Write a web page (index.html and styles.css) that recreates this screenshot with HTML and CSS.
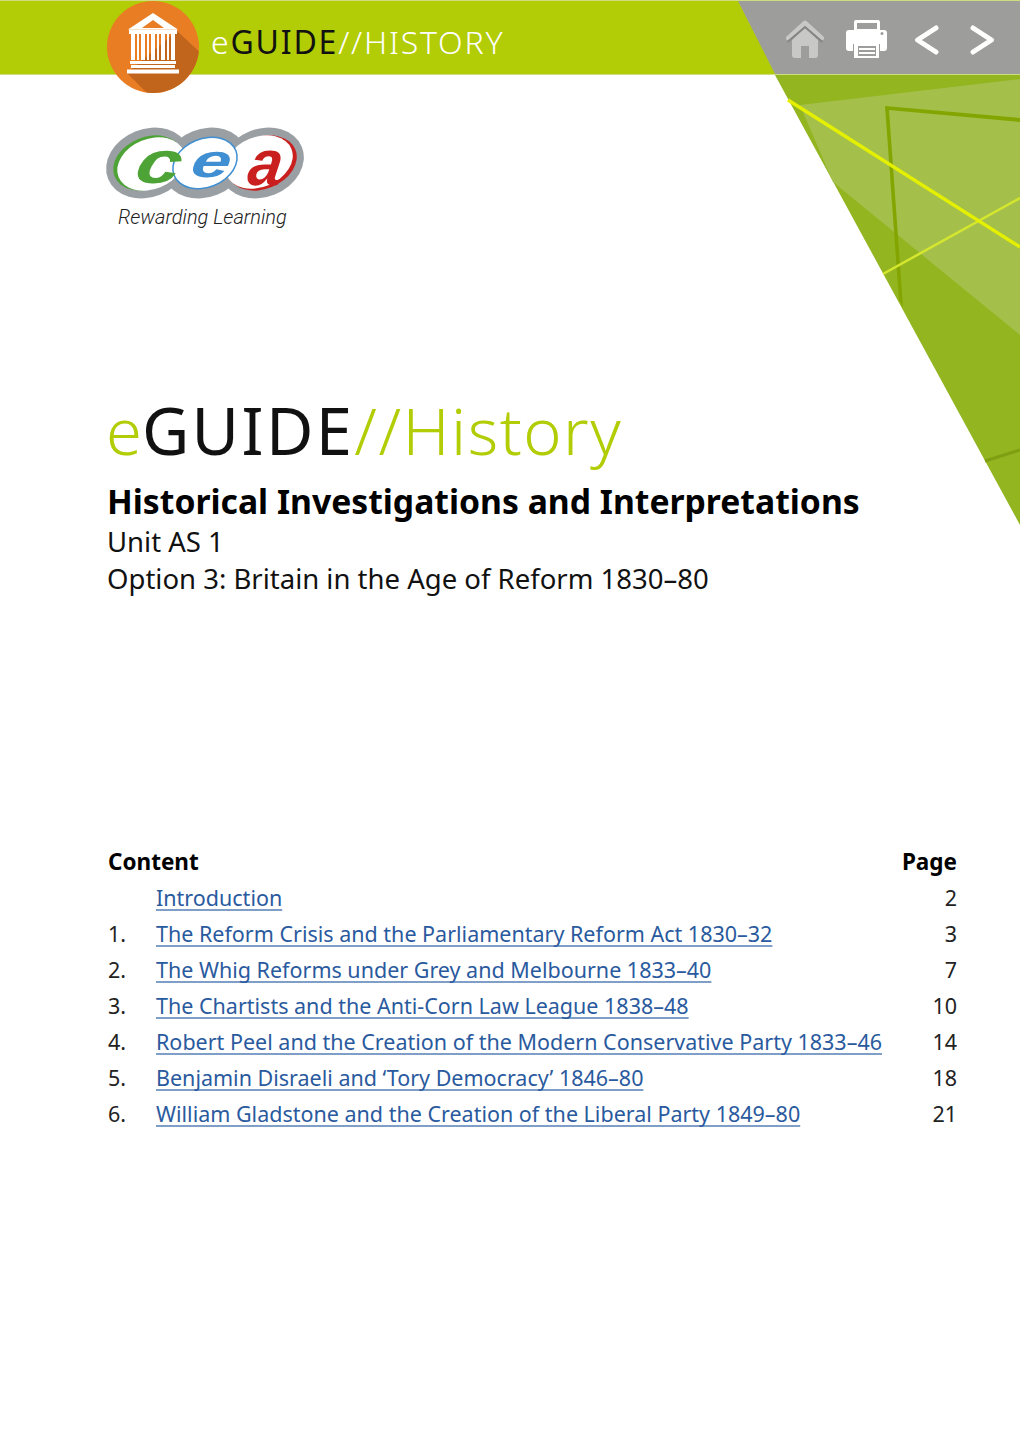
FILE: index.html
```html
<!DOCTYPE html>
<html lang="en">
<head>
<meta charset="utf-8">
<title>eGUIDE History</title>
<link rel="stylesheet" href="styles.css">
</head>
<body>
<div class="page">
  <svg class="corner" viewBox="0 0 245 450" aria-hidden="true">
    <g transform="translate(-775 -75)">
      <polygon points="775,75 1020,75 1020,525" fill="#92b520"/>
      <polygon points="800,105 1020,79 1020,335 833,182" fill="#a5c04a"/>
      <polygon points="885,106 1020,118 1020,122 889,110 903,307 899,300" fill="#84a500"/>
      <line x1="985" y1="461" x2="1020" y2="450" stroke="#7f9e12" stroke-width="3"/>
      <line x1="883" y1="274" x2="1020" y2="198" stroke="#d5e62f" stroke-width="2.500"/>
      <line x1="788" y1="100" x2="1020" y2="247" stroke="#e4f000" stroke-width="3.500"/>
    </g>
  </svg>

  <header class="topbar">
    <svg class="badge" viewBox="0 0 92 92" aria-hidden="true">
      <defs><clipPath id="disc"><circle cx="46" cy="46" r="46"/></clipPath></defs>
      <circle cx="46" cy="46" r="46" fill="#e97d24"/>
      <polygon points="70,30 100,58 100,100 48,100 20,72" fill="#c0651b" clip-path="url(#disc)"/>
      <g fill="#fff">
        <path d="M46 12 L71 28.500 L21 28.500 Z M46 19 L35 27 L57 27 Z" fill-rule="evenodd"/>
        <rect x="22" y="28.500" width="48" height="4.500"/>
        <rect x="24" y="33" width="4" height="26"/><rect x="30" y="33" width="2" height="26"/>
        <rect x="34" y="33" width="4" height="26"/><rect x="40" y="33" width="2" height="26"/>
        <rect x="44" y="33" width="4" height="26"/><rect x="50" y="33" width="2" height="26"/>
        <rect x="54" y="33" width="4" height="26"/><rect x="60" y="33" width="2" height="26"/>
        <rect x="64" y="33" width="4" height="26"/>
        <rect x="23" y="60" width="46" height="3"/>
        <rect x="24" y="64" width="44" height="3"/>
        <rect x="20" y="68.500" width="52" height="4"/>
      </g>
    </svg>
    <div class="brand"><span class="white">e</span>GUIDE<span class="white">//HISTORY</span></div>
    <nav class="tools">
      <svg class="ico home" viewBox="0 0 38 38" aria-hidden="true">
        <path d="M6 20 V35 Q6 38 9 38 H15 V26 H23 V38 H29 Q32 38 32 35 V20 L19 8 Z" fill="#c8c8c7"/>
        <path d="M2.500 18 L19 3 L35.500 18" fill="none" stroke="#c8c8c7" stroke-width="5" stroke-linecap="round" stroke-linejoin="round"/>
        <path d="M1.500 22 L19 7 L36.500 22" fill="none" stroke="#858584" stroke-width="2"/>
      </svg>
      <svg class="ico printer" viewBox="0 0 41 38" aria-hidden="true">
        <path d="M8 10 V2 Q8 0 10 0 H32 Q34 0 34 2 V10 Z M11 9 H31 V3 H11 Z" fill="#fff" fill-rule="evenodd"/>
        <path d="M3 10 H38 Q41 10 41 13 V28 Q41 31 38 31 H34 V24 H7 V31 H3 Q0 31 0 28 V13 Q0 10 3 10 Z" fill="#fff"/>
        <path d="M8 24 H33 V38 H8 Z" fill="#fff"/>
        <path d="M12 26 H30 V36 H12 Z" fill="#9d9d9c"/>
        <path d="M13 29 H29 M13 33 H29" stroke="#fff" stroke-width="2"/>
        <circle cx="36" cy="13.500" r="1.500" fill="#9d9d9c"/>
      </svg>
      <svg class="ico chev" viewBox="0 0 25 30" aria-hidden="true"><path d="M22 3 L3.500 15 L22 27" fill="none" stroke="#fff" stroke-width="5" stroke-linecap="round" stroke-linejoin="round"/></svg>
      <svg class="ico chev" viewBox="0 0 25 30" aria-hidden="true"><path d="M3 3 L21.500 15 L3 27" fill="none" stroke="#fff" stroke-width="5" stroke-linecap="round" stroke-linejoin="round"/></svg>
    </nav>
  </header>

  <main class="main">
    <div class="logo">
      <svg class="cea" viewBox="0 0 200 76" aria-hidden="true">
        <g fill="#9a9fa3">
          <ellipse cx="43" cy="37" rx="43" ry="34" transform="rotate(-22 43 37)"/>
          <ellipse cx="100" cy="37" rx="43" ry="34" transform="rotate(-22 100 37)"/>
          <ellipse cx="157" cy="37" rx="43" ry="34" transform="rotate(-22 157 37)"/>
        </g>
        <ellipse cx="43" cy="37" rx="36" ry="26" transform="rotate(-22 43 37)" fill="#4ea337"/>
        <ellipse cx="46" cy="38" rx="35" ry="25" transform="rotate(-22 46 38)" fill="#fff"/>
        <ellipse cx="157" cy="37" rx="36" ry="26" transform="rotate(-22 157 37)" fill="#c9201f"/>
        <ellipse cx="154" cy="36" rx="35" ry="25" transform="rotate(-22 154 36)" fill="#fff"/>
        <ellipse cx="100" cy="37" rx="34" ry="25" transform="rotate(-22 100 37)" fill="#3f8fd2"/>
        <ellipse cx="100" cy="37" rx="32.500" ry="23.500" transform="rotate(-22 100 37)" fill="#fff"/>
        <text class="cea-c" transform="translate(28 57) skewX(-12) scale(1.350 1)">c</text>
        <text class="cea-e" transform="translate(84 51) skewX(-12) scale(1.500 1)">e</text>
        <text class="cea-a" transform="translate(141 59) skewX(-8) scale(0.950 1)">a</text>
      </svg>
      <p class="tagline">Rewarding Learning</p>
    </div>

    <h1 class="title"><span class="lime">e</span><span class="guide">GUIDE</span><span class="lime hist">//History</span></h1>
    <h2 class="subtitle">Historical Investigations and Interpretations</h2>
    <p class="unit">Unit AS 1</p>
    <p class="unit">Option 3: Britain in the Age of Reform 1830–80</p>

    <section class="toc">
      <div class="toc-head"><span>Content</span><span>Page</span></div>
      <div class="row"><span></span><a href="#">Introduction</a><span class="pg">2</span></div>
      <div class="row"><span>1.</span><a href="#">The Reform Crisis and the Parliamentary Reform Act 1830–32</a><span class="pg">3</span></div>
      <div class="row"><span>2.</span><a href="#">The Whig Reforms under Grey and Melbourne 1833–40</a><span class="pg">7</span></div>
      <div class="row"><span>3.</span><a href="#">The Chartists and the Anti-Corn Law League 1838–48</a><span class="pg">10</span></div>
      <div class="row"><span>4.</span><a href="#">Robert Peel and the Creation of the Modern Conservative Party 1833–46</a><span class="pg">14</span></div>
      <div class="row"><span>5.</span><a href="#">Benjamin Disraeli and ‘Tory Democracy’ 1846–80</a><span class="pg">18</span></div>
      <div class="row"><span>6.</span><a href="#">William Gladstone and the Creation of the Liberal Party 1849–80</a><span class="pg">21</span></div>
    </section>
  </main>
</div>
</body>
</html>
```
FILE: styles.css
```css
* { box-sizing: border-box; }
html, body { margin: 0; background: #fff; }
body { font-family: "Noto Sans", "Open Sans", sans-serif; color: #111; }
.page { position: relative; width: 1020px; height: 1442px; overflow: hidden; }

.corner { position: absolute; left: 775px; top: 75px; width: 245px; height: 450px; }

.topbar {
  position: relative;
  display: flex;
  align-items: center;
  height: 75px;
  background: #b2cc05;
  border-top: 1px solid #cfdc80;
  border-bottom: 1px solid #cfdc80;
}
.badge { position: absolute; left: 107px; top: 0; width: 92px; height: 92px; }
.brand {
  margin: 8px 0 0 211px;
  font-size: 32px;
  line-height: 1;
  letter-spacing: 1.8px;
  color: #111;
}
.white { color: #fff; font-weight: 300; }
.tools {
  margin-left: auto;
  width: 282px;
  align-self: stretch;
  display: flex;
  align-items: flex-start;
  padding: 19px 0 0 48px;
  background: #9d9d9c;
  clip-path: polygon(0 0, 100% 0, 100% 100%, 37px 100%);
}
.ico { display: block; flex: none; }
.home { width: 38px; height: 38px; }
.printer { width: 41px; height: 38px; margin-left: 22px; }
.chev { width: 25px; height: 30px; margin-top: 5px; margin-left: 27px; }
.chev:last-child { margin-left: 31px; }

.main { padding: 51px 63px 0 108px; }
.logo { margin-left: -3px; }
.cea { display: block; width: 200px; height: 76px; overflow: visible; }
.cea text { font-family: "Liberation Sans", sans-serif; font-weight: 700; font-style: italic; }
.cea .cea-c { fill: #4ea337; font-size: 60px; }
.cea .cea-e { fill: #3f8fd2; font-size: 47px; }
.cea .cea-a { fill: #c9201f; font-size: 64px; }
.tagline {
  margin: 2px 0 0 13px;
  font-family: Roboto, sans-serif;
  font-style: italic;
  font-weight: 300;
  font-size: 20px;
  line-height: 26px;
  color: #222;
}

.title {
  margin: 162px 0 0 -2px;
  font-size: 65px;
  line-height: 76px;
  font-weight: 300;
}
.lime { color: #b2cc05; }
.hist { letter-spacing: 1.500px; }
.guide { color: #111; letter-spacing: 2.400px; font-weight: 400; }
.subtitle {
  margin: 12px 0 0 -1px;
  font-size: 33.700px;
  line-height: 43px;
  font-weight: 700;
  color: #000;
}
.unit { margin: 0 0 0 -1px; font-size: 27.500px; line-height: 37px; color: #111; }

.toc { margin-top: 247px; }
.toc-head {
  display: flex;
  justify-content: space-between;
  font-size: 22.500px;
  font-weight: 700;
  line-height: 36px;
  color: #000;
}
.row {
  display: grid;
  grid-template-columns: 48px 1fr auto;
  font-size: 21.500px;
  line-height: 36px;
  color: #222;
}
.row a { color: #2a5a9e; text-decoration: underline; text-decoration-color: #7f9fc9; text-decoration-skip-ink: none; text-underline-offset: 3px; justify-self: start; }
.pg { text-align: right; }
```
